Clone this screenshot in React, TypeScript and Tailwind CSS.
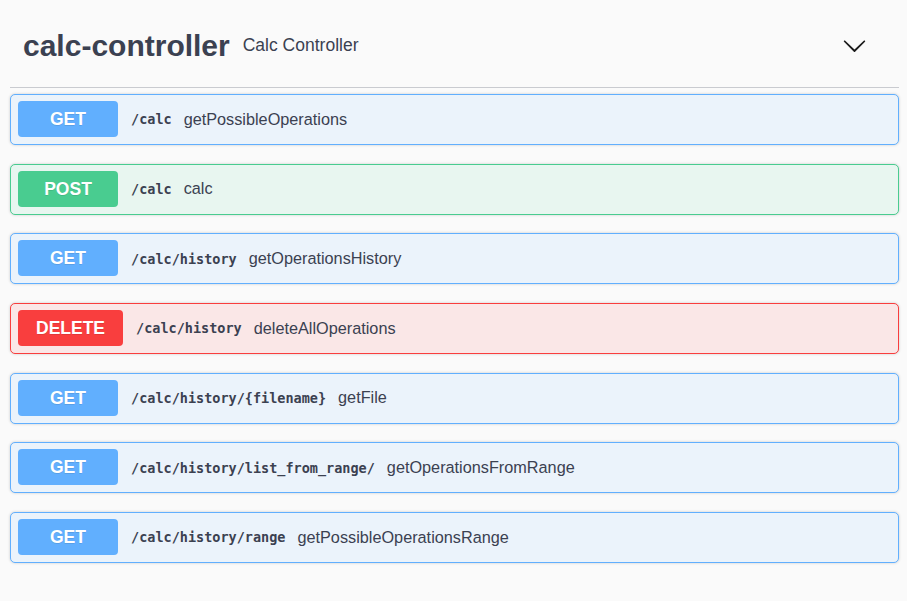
type Method = "GET" | "POST" | "DELETE";

interface Operation {
  method: Method;
  path: string;
  summary: string;
}

const OPERATIONS: Operation[] = [
  { method: "GET", path: "/calc", summary: "getPossibleOperations" },
  { method: "POST", path: "/calc", summary: "calc" },
  { method: "GET", path: "/calc/history", summary: "getOperationsHistory" },
  { method: "DELETE", path: "/calc/history", summary: "deleteAllOperations" },
  { method: "GET", path: "/calc/history/{filename}", summary: "getFile" },
  {
    method: "GET",
    path: "/calc/history/list_from_range/",
    summary: "getOperationsFromRange",
  },
  {
    method: "GET",
    path: "/calc/history/range",
    summary: "getPossibleOperationsRange",
  },
];

const BLOCK_STYLES: Record<Method, { block: string; badge: string }> = {
  GET: { block: "border-[#61affe] bg-[#ebf3fb]", badge: "bg-[#61affe]" },
  POST: { block: "border-[#49cc90] bg-[#e8f6f0]", badge: "bg-[#49cc90]" },
  DELETE: { block: "border-[#f93e3e] bg-[#fae7e7]", badge: "bg-[#f93e3e]" },
};

function Chevron() {
  return (
    <svg width="25" height="25" viewBox="0 0 20 20" className="fill-[#1a1a1a]">
      <path d="M17.418 6.109c.272-.268.709-.268.979 0s.271.701 0 .969l-7.908 7.83c-.27.268-.707.268-.979 0l-7.908-7.83c-.27-.268-.27-.701 0-.969.271-.268.709-.268.979 0L10 13.25l7.418-7.141z" />
    </svg>
  );
}

function OperationBlock({ op }: { op: Operation }) {
  const styles = BLOCK_STYLES[op.method];
  return (
    <div
      className={`flex items-center rounded-[5px] border pt-[6px] pb-[7px] pl-[7px] shadow-[0_0_3px_rgba(0,0,0,0.19)] ${styles.block}`}
    >
      <span
        className={`flex h-[36px] min-w-[100px] items-center justify-center rounded-[4px] px-[18px] text-[17.5px] font-bold text-white [text-shadow:0_1px_0_rgba(0,0,0,0.1)] ${styles.badge}`}
      >
        {op.method}
      </span>
      <span className="mt-[1px] ml-[13px] font-['DejaVu_Sans_Mono',monospace] text-[13.5px] font-bold text-[#3b4151]">
        {op.path}
      </span>
      <span className="ml-[12px] text-[16.25px] text-[#3b4151]">
        {op.summary}
      </span>
    </div>
  );
}

export default function App() {
  return (
    <div className="min-h-screen bg-[#fafafa] pr-[8px] pl-[10px] font-['Liberation_Sans',Arial,sans-serif] text-[#3b4151]">
      <div className="flex h-[88px] items-center border-b border-[#c9cbd0] pt-1">
        <h4 className="ml-[13px] text-[30px] leading-none font-bold">
          calc-controller
        </h4>
        <small className="ml-[13px] text-[17.5px]">Calc Controller</small>
        <div className="mr-[32px] ml-auto flex items-center">
          <Chevron />
        </div>
      </div>
      <div className="mt-[6px] flex flex-col gap-[18.67px]">
        {OPERATIONS.map((op, i) => (
          <OperationBlock key={i} op={op} />
        ))}
      </div>
    </div>
  );
}
